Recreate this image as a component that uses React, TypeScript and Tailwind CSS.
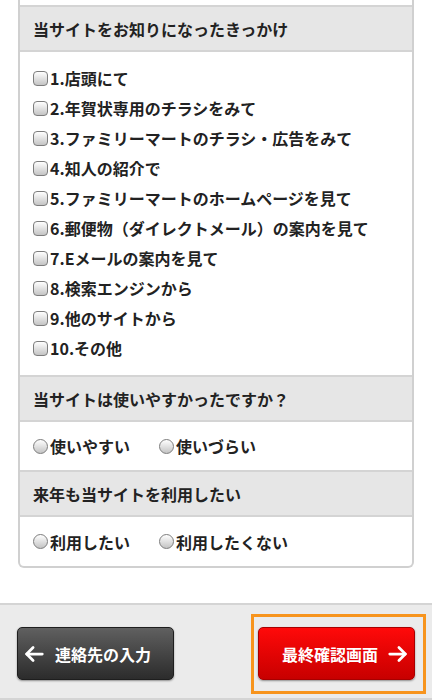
import React from "react";

const font = { fontFamily: '"Noto Sans CJK JP", "Noto Sans", sans-serif' };

function Check() {
  return (
    <span className="block w-[15px] h-[15px] min-w-[15px] rounded-[4px] border border-[#7d7d7d] bg-gradient-to-b from-[#ffffff] to-[#c4c4c4] shrink-0 mr-[2px]" />
  );
}

function Radio() {
  return (
    <span className="block w-[15px] h-[15px] min-w-[15px] rounded-full border border-[#7d7d7d] bg-gradient-to-b from-[#ffffff] to-[#c4c4c4] shrink-0 mr-[2px]" />
  );
}

function Header({ children }: { children: React.ReactNode }) {
  return (
    <div className="h-[47px] border-y-2 border-[#d4d4d4] bg-[#e6e6e6] flex items-center pl-[13px] text-[16px] font-bold text-[#222]">
      {children}
    </div>
  );
}

const items = [
  "1.店頭にて",
  "2.年賀状専用のチラシをみて",
  "3.ファミリーマートのチラシ・広告をみて",
  "4.知人の紹介で",
  "5.ファミリーマートのホームページを見て",
  "6.郵便物（ダイレクトメール）の案内を見て",
  "7.Eメールの案内を見て",
  "8.検索エンジンから",
  "9.他のサイトから",
  "10.その他",
];

function RadioRow({ a, b, last }: { a: string; b: string; last?: boolean }) {
  return (
    <div className={`${last ? "h-[49px]" : "h-[48px]"} flex items-center pl-[13px] text-[16px] font-bold text-[#222]`}>
      <div className="flex items-center w-[126px]">
        <Radio />
        <span>{a}</span>
      </div>
      <div className="flex items-center">
        <Radio />
        <span>{b}</span>
      </div>
    </div>
  );
}

export default function App() {
  return (
    <div className="w-[432px] h-[700px] overflow-hidden bg-white flex flex-col" style={font}>
      <div className="px-[18px]">
        <div className="border-x-2 border-b-2 border-[#d0d0d0] rounded-b-[6px] bg-white">
          <div className="h-[5px]" />
          <Header>当サイトをお知りになったきっかけ</Header>
          <div className="pt-[11px] pb-[12px]">
            {items.map((t) => (
              <div key={t} className="h-[30px] flex items-center pl-[13px] text-[16px] font-bold text-[#222]">
                <Check />
                <span>{t}</span>
              </div>
            ))}
          </div>
          <Header>当サイトは使いやすかったですか？</Header>
          <RadioRow a="使いやすい" b="使いづらい" />
          <Header>来年も当サイトを利用したい</Header>
          <RadioRow a="利用したい" b="利用したくない" last />
        </div>
      </div>
      <div className="h-[35px]" />
      <div className="flex-1 border-t-2 border-b-2 border-[#d4d4d4] bg-[#ebebeb] flex items-start pt-[9px]">
        <button className="ml-[17px] mt-[13px] w-[157px] h-[53px] rounded-[5px] border border-[#1e1e1e] bg-gradient-to-b from-[#606060] to-[#2c2c2c] shadow-[0_1px_2px_rgba(0,0,0,0.4)] flex items-center text-white text-[16px] font-bold" style={font}>
          <svg className="ml-[5px] mr-[10px]" width="22" height="22" viewBox="0 0 24 24" fill="none" stroke="white" strokeWidth="3" strokeLinecap="round" strokeLinejoin="round">
            <path d="M21 12H4" />
            <path d="M11 5l-7 7 7 7" />
          </svg>
          <span>連絡先の入力</span>
        </button>
        <div className="ml-auto mr-[6px] w-[175px] h-[80px] border-[3px] border-[#f7941d] pl-[4px] pt-[10px]">
          <button className="w-[157px] h-[53px] rounded-[5px] border border-[#a80000] bg-gradient-to-b from-[#ff0a0a] to-[#c80000] shadow-[0_1px_2px_rgba(0,0,0,0.4)] flex items-center text-white text-[16px] font-bold" style={font}>
            <span className="ml-[23px]">最終確認画面</span>
            <svg className="ml-[9px]" width="22" height="22" viewBox="0 0 24 24" fill="none" stroke="white" strokeWidth="3" strokeLinecap="round" strokeLinejoin="round">
              <path d="M3 12h17" />
              <path d="M13 5l7 7-7 7" />
            </svg>
          </button>
        </div>
      </div>
    </div>
  );
}
